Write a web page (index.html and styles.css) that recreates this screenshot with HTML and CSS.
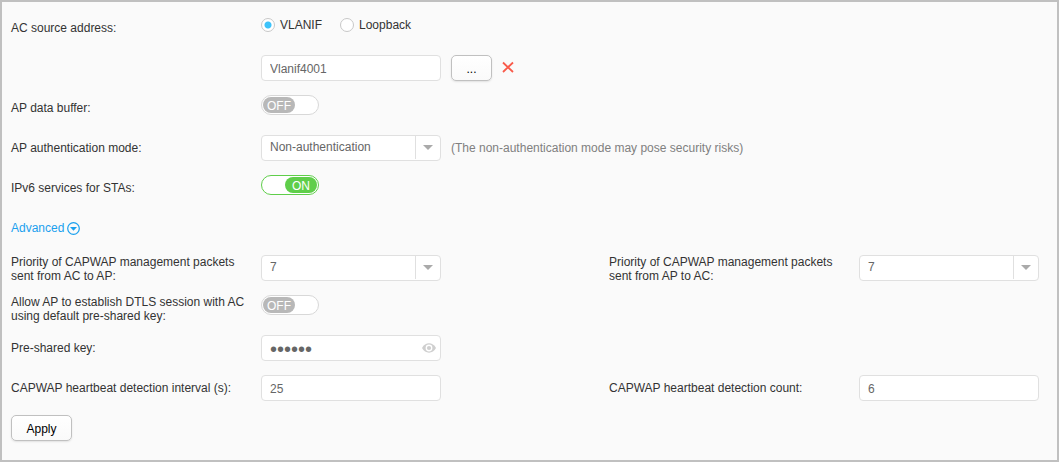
FILE: index.html
```
<!DOCTYPE html>
<html lang="en">

<head>
    <meta charset="UTF-8">
    <meta name="viewport" content="width=device-width, initial-scale=1.0">
    <title>AC Configuration</title>
    <link rel="stylesheet" href="styles.css">
</head>

<body>
    <form class="settings" onsubmit="return false">
        <div class="row" role="radiogroup" aria-labelledby="sourceLabel">
            <span class="label" id="sourceLabel">AC source address:</span>
            <div class="field">
                <label class="radio"><input type="radio" name="source" checked>VLANIF</label>
                <label class="radio"><input type="radio" name="source">Loopback</label>
            </div>
        </div>

        <div class="row">
            <div class="field field-only">
                <input type="text" class="input" value="Vlanif4001" aria-label="VLANIF interface">
                <button type="button" class="btn browse-btn">...</button>
                <button type="button" class="clear-btn" aria-label="Clear">
                    <svg width="12" height="14" viewBox="0 0 12 14">
                        <path d="M1 1.5L11 11M11 1.5L1 11" fill="none" stroke="#f95a4a" stroke-width="1.8" />
                    </svg>
                </button>
            </div>
        </div>

        <div class="row">
            <label class="label" for="dataBuffer">AP data buffer:</label>
            <div class="field">
                <label class="switch">
                    <input type="checkbox" id="dataBuffer">
                    <span class="knob off">OFF</span>
                    <span class="knob on">ON</span>
                </label>
            </div>
        </div>

        <div class="row">
            <label class="label" for="authMode">AP authentication mode:</label>
            <div class="field">
                <div class="select">
                    <select id="authMode">
                        <option>Non-authentication</option>
                    </select>
                </div>
                <span class="hint">(The non-authentication mode may pose security risks)</span>
            </div>
        </div>

        <div class="row">
            <label class="label" for="ipv6">IPv6 services for STAs:</label>
            <div class="field">
                <label class="switch">
                    <input type="checkbox" id="ipv6" checked>
                    <span class="knob off">OFF</span>
                    <span class="knob on">ON</span>
                </label>
            </div>
        </div>

        <div class="row">
            <a href="#advanced" class="advanced">Advanced
                <svg width="13" height="13" viewBox="0 0 13 13">
                    <circle cx="6.5" cy="6.5" r="5.8" fill="none" stroke="#1ba0ee" stroke-width="1.2" />
                    <path d="M3 5H10L6.5 8.7Z" fill="#1ba0ee" />
                </svg>
            </a>
        </div>

        <div class="row" id="advanced">
            <label class="label" for="priorityAc">Priority of CAPWAP management packets sent from AC to AP:</label>
            <div class="field">
                <div class="select">
                    <select id="priorityAc">
                        <option>7</option>
                    </select>
                </div>
            </div>
            <label class="label" for="priorityAp">Priority of CAPWAP management packets sent from AP to AC:</label>
            <div class="field">
                <div class="select">
                    <select id="priorityAp">
                        <option>7</option>
                    </select>
                </div>
            </div>
        </div>

        <div class="row">
            <label class="label" for="dtls">Allow AP to establish DTLS session with AC using default pre-shared key:</label>
            <div class="field">
                <label class="switch">
                    <input type="checkbox" id="dtls">
                    <span class="knob off">OFF</span>
                    <span class="knob on">ON</span>
                </label>
            </div>
        </div>

        <div class="row">
            <label class="label" for="psk">Pre-shared key:</label>
            <div class="field">
                <div class="password">
                    <input type="password" class="input" id="psk" value="secret">
                    <button type="button" class="eye-btn" aria-label="Show key">
                        <svg width="14" height="10" viewBox="0 0 14 10">
                            <path d="M0 5C3.2-1.2 10.8-1.2 14 5C10.8 11.2 3.2 11.2 0 5Z" fill="#cfcfcf" />
                            <circle cx="7" cy="5" r="3.4" fill="#fff" />
                            <circle cx="7" cy="5" r="2.1" fill="#cfcfcf" />
                        </svg>
                    </button>
                </div>
            </div>
        </div>

        <div class="row">
            <label class="label" for="interval">CAPWAP heartbeat detection interval (s):</label>
            <div class="field">
                <input type="text" class="input" id="interval" value="25">
            </div>
            <label class="label" for="count">CAPWAP heartbeat detection count:</label>
            <div class="field">
                <input type="text" class="input" id="count" value="6">
            </div>
        </div>

        <div class="row">
            <button type="submit" class="btn apply-btn">Apply</button>
        </div>
    </form>
</body>

</html>
```
FILE: styles.css
```
* {
    box-sizing: border-box;
}

body {
    margin: 0;
    min-height: 100vh;
    border: 2px solid #c0c0c0;
    background-color: #fafafa;
    font-family: "Liberation Sans", Arial, sans-serif;
    font-size: 12px;
    line-height: 14px;
    color: #333;
}

input,
select,
button {
    margin: 0;
    font: inherit;
}

.settings {
    padding: 13px 18px 5px 9px;
}

.row {
    display: grid;
    grid-template-columns: 250px 1fr 250px 180px;
    align-items: start;
    min-height: 40px;
}

.label {
    display: flex;
    align-items: center;
    min-height: 26px;
    padding-right: 8px;
}

.field {
    display: flex;
    align-items: center;
    gap: 10px;
    white-space: nowrap;
}

.field-only {
    grid-column: 2;
}

.input,
.select select {
    width: 180px;
    height: 26px;
    padding: 2px 8px 0;
    border: 1px solid #e0e0e0;
    border-radius: 4px;
    background-color: #fff;
    color: #666;
}

/* radios */
.radio {
    display: flex;
    align-items: center;
    gap: 5px;
    height: 20px;
    margin-right: 8px;
}

.radio input {
    appearance: none;
    width: 14px;
    height: 14px;
    border: 1px solid #c8c8c8;
    border-radius: 50%;
    background-color: #fff;
}

.radio input:checked {
    background: radial-gradient(circle, #3dc3fa 3px, #fff 4px);
}

/* buttons */
.btn {
    height: 26px;
    padding: 0;
    border: 1px solid #c0c0c0;
    border-radius: 5px;
    background: linear-gradient(#fff, #fafafa);
    box-shadow: 0 1px 2px rgba(0, 0, 0, 0.1);
    color: #000;
    cursor: pointer;
}

.browse-btn {
    width: 41px;
    padding-top: 2px;
}

.apply-btn {
    width: 61px;
    padding-top: 2px;
}

.clear-btn,
.eye-btn {
    display: flex;
    padding: 0;
    border: none;
    background: none;
    cursor: pointer;
}

/* on/off switch */
.switch {
    display: flex;
    width: 58px;
    height: 20px;
    padding: 1px;
    border: 1px solid #d8d8d8;
    border-radius: 10px;
    background-color: #fff;
    cursor: pointer;
}

.switch input {
    position: absolute;
    opacity: 0;
}

.knob {
    width: 32px;
    height: 16px;
    border-radius: 8px;
    line-height: 18px;
    text-align: center;
    color: #fff;
}

.off {
    background-color: #b8b8b8;
}

.on {
    display: none;
    background-color: #5fce4a;
}

.switch:has(:checked) {
    justify-content: flex-end;
    border-color: #5fce4a;
}

.switch :checked ~ .off {
    display: none;
}

.switch :checked ~ .on {
    display: block;
}

/* drop-downs */
.select {
    position: relative;
}

.select select {
    display: block;
    appearance: none;
    padding: 0 34px 2px 8px;
}

.select::before {
    content: "";
    position: absolute;
    top: 1px;
    right: 25px;
    height: 23px;
    border-left: 1px solid #e0e0e0;
    pointer-events: none;
}

.select::after {
    content: "";
    position: absolute;
    top: 10px;
    right: 8px;
    border: 5px solid transparent;
    border-top-color: #aaa;
    border-bottom: none;
    pointer-events: none;
}

.hint {
    color: #808080;
}

.advanced {
    display: flex;
    align-items: center;
    gap: 3px;
    height: 26px;
    color: #1ba0ee;
    text-decoration: none;
}

.password {
    position: relative;
}

.password .input {
    display: block;
    padding-right: 28px;
    font-size: 20px;
}

.eye-btn {
    position: absolute;
    top: 8px;
    right: 5px;
}
```
